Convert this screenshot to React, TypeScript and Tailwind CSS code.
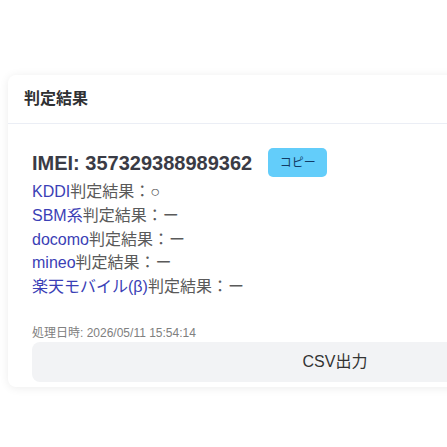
import React from 'react';

const carriers = [
  { name: 'KDDI', result: '○' },
  { name: 'SBM系', result: 'ー' },
  { name: 'docomo', result: 'ー' },
  { name: 'mineo', result: 'ー' },
  { name: '楽天モバイル(β)', result: 'ー' },
];

const App: React.FC = () => {
  return (
    <div
      className="w-full min-h-[447px] overflow-hidden bg-white pt-[75px] pl-2"
      style={{ fontFamily: '"Liberation Sans", "Noto Sans CJK JP", sans-serif' }}
    >
      {/* Result card */}
      <div className="w-[654px] rounded-lg bg-white shadow-[0_1px_10px_rgba(0,0,0,0.08)]">
        <div className="px-4 py-3 border-b border-[#ebeef5]">
          <h3 className="text-base leading-6 font-bold text-[#303133]">判定結果</h3>
        </div>
        <div className="pl-6 pr-6 pt-6 pb-[5px]">
          <div className="flex items-start mb-[2px]">
            <h2 className="text-[20px] leading-[30px] font-bold text-[#3a3b45]">IMEI: 357329388989362</h2>
            <button className="ml-4 h-[29px] w-[59px] rounded-[5px] bg-[#63cdfa] text-[12px] text-[#123c66]">
              コピー
            </button>
          </div>
          <div className="text-base leading-[23.75px]">
            {carriers.map((c) => (
              <div key={c.name}>
                <span className="text-[#3b3fb6]">{c.name}</span>
                <span className="text-[#5a5a5a]">判定結果：{c.result}</span>
              </div>
            ))}
          </div>
          <div className="mt-[25px] text-[12px] leading-[18px] text-[#808080]">処理日時: 2026/05/11 15:54:14</div>
          <button className="w-full h-10 rounded-lg bg-[#f2f3f5] text-base text-[#333]">CSV出力</button>
        </div>
      </div>
    </div>
  );
};

export default App;
